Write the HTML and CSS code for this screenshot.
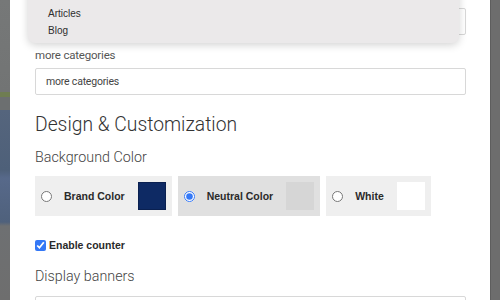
FILE: index.html
```html
<!DOCTYPE html>
<html lang="en">
<head>
  <meta charset="UTF-8">
  <title>Widget Settings</title>
  <link rel="stylesheet" href="styles.css">
</head>
<body>

  <div class="screen">
    <div class="backdrop backdrop-left"></div>

    <div class="modal">
      <div class="select-box"></div>

      <ul class="dropdown">
        <li>Articles</li>
        <li>Blog</li>
      </ul>

      <label class="field-label" for="more">more categories</label>
      <input type="text" id="more" class="text-input" value="more categories">

      <h2 class="section-title">Design &amp; Customization</h2>
      <h3 class="sub-title">Background Color</h3>

      <div class="color-options">
        <label class="color-card">
          <input type="radio" name="bg">
          <span class="color-name">Brand Color</span>
          <span class="swatch swatch-brand"></span>
        </label>
        <label class="color-card selected">
          <input type="radio" name="bg" checked>
          <span class="color-name">Neutral Color</span>
          <span class="swatch swatch-neutral"></span>
        </label>
        <label class="color-card">
          <input type="radio" name="bg">
          <span class="color-name">White</span>
          <span class="swatch swatch-white"></span>
        </label>
      </div>

      <label class="check-row">
        <input type="checkbox" checked>
        <span>Enable counter</span>
      </label>

      <h3 class="sub-title banners">Display banners</h3>
      <div class="select-box last"></div>
    </div>

    <div class="backdrop backdrop-right"></div>
  </div>

</body>
</html>
```

FILE: styles.css
```css
html, body {
  margin: 0;
  height: 100%;
  overflow: hidden;
}
body {
  font-family: Roboto, "Liberation Sans", sans-serif;
  background: #6e6e6e;
}
.screen {
  display: flex;
  height: 300px;
  overflow: hidden;
}
.backdrop {
  width: 10px;
  flex-shrink: 0;
}
.backdrop-left {
  background: linear-gradient(to bottom,
    #767878 0, #727474 92px,
    #6f7d52 92px, #6f7d52 97px,
    #6c6f70 97px, #6c6f70 110px,
    #55657d 110px, #4e6079 170px,
    #57698a 178px, #4f617c 222px,
    #6e7072 226px, #6e6e6e 300px);
}
.backdrop-right {
  background: #6d6d6d;
  border-left: 1px solid #5e5e5e;
  width: 9px;
}
.modal {
  flex: 1;
  position: relative;
  background: #fff;
  padding: 0 24px 0 25px;
  overflow: hidden;
}
.select-box {
  margin-top: 8px;
  height: 25px;
  border: 1px solid #d8d8d8;
  border-radius: 2px;
}
.dropdown {
  position: absolute;
  left: 18px;
  top: -20px;
  width: 431px;
  margin: 0;
  padding: 25px 0 4px;
  list-style: none;
  background: #ebe9ea;
  border-radius: 0 0 7px 7px;
  box-shadow: 0 2px 8px rgba(0, 0, 0, 0.18);
  font-family: "Liberation Sans", Arial, sans-serif;
  font-size: 10px;
  color: #2e2e2e;
}
.dropdown li {
  line-height: 17px;
  padding-left: 20px;
}
.field-label {
  display: block;
  margin-top: 12px;
  margin-bottom: 5px;
  font-size: 11.5px;
  letter-spacing: -0.2px;
  line-height: 16px;
  color: #555;
}
.text-input {
  display: block;
  box-sizing: border-box;
  width: 100%;
  height: 27px;
  margin: 0;
  padding: 0 10px;
  border: 1px solid #d8d8d8;
  border-radius: 2px;
  font-family: Roboto, "Liberation Sans", sans-serif;
  font-size: 10.5px;
  letter-spacing: -0.2px;
  color: #444;
}
.section-title {
  margin: 18px 0 0;
  font-size: 19.3px;
  line-height: 24px;
  font-weight: 300;
  color: #333;
}
.sub-title {
  margin: 10px 0 0;
  font-size: 14.3px;
  line-height: 20px;
  font-weight: 300;
  color: #444;
}
.color-options {
  display: flex;
  gap: 6px;
  margin-top: 9px;
}
.color-card {
  display: flex;
  align-items: center;
  height: 40px;
  box-sizing: border-box;
  padding: 6px;
  background: #efefef;
}
.color-card.selected {
  background: #e0e0e0;
}
.color-card input {
  width: 11px;
  height: 11px;
  margin: 0;
  accent-color: #3478f6;
}
.color-name {
  margin: 0 13px 0 12px;
  font-family: "Liberation Sans", Arial, sans-serif;
  font-size: 10.5px;
  font-weight: bold;
  color: #2a2a2a;
}
.swatch {
  width: 28px;
  height: 28px;
}
.swatch-brand {
  background: #0e2a64;
  box-shadow: inset 0 0 0 1px #0a2050;
}
.swatch-neutral {
  background: #d6d6d6;
}
.swatch-white {
  background: #fff;
}
.check-row {
  display: flex;
  align-items: center;
  gap: 3px;
  margin-top: 23px;
  font-family: "Liberation Sans", Arial, sans-serif;
  font-size: 10.5px;
  font-weight: bold;
  color: #2a2a2a;
}
.check-row input {
  width: 11px;
  height: 11px;
  margin: 0;
  accent-color: #3478f6;
}
.banners {
  margin-top: 15px;
}
.select-box.last {
  margin-top: 10px;
}
```
